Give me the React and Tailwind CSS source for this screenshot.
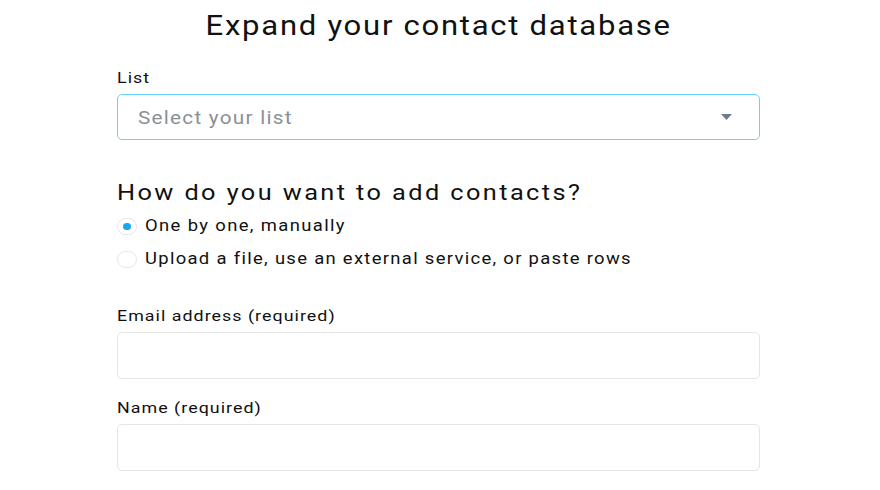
export default function App() {
  return (
    <div className="w-[880px] h-[490px] bg-white overflow-hidden" style={{ fontFamily: "Roboto, 'Liberation Sans', sans-serif" }}>
      <div className="w-[643px] ml-[117px] pt-[8px] flex flex-col">
        <h1 className="h-[36px] flex justify-center items-center text-[27px] leading-[36px] text-[#111]">
          <span className="inline-block whitespace-nowrap scale-x-[1.15] origin-center tracking-[1.5px]">Expand your contact database</span>
        </h1>
        <label className="mt-[24px] h-[20px] text-[15.5px] leading-[20px] text-[#111]">
          <span className="inline-block whitespace-nowrap scale-x-[1.15] origin-left tracking-[0.9px]">List</span>
        </label>
        <div className="mt-[6px] h-[46px] rounded-[5px] border-[1.5px] border-[#66d4fa] flex items-center justify-between pl-[20px] pr-[27px]">
          <span className="inline-block whitespace-nowrap scale-x-[1.15] origin-left text-[18px] text-[#8b9097] tracking-[1.1px]">Select your list</span>
          <svg width="11" height="6" viewBox="0 0 11 6"><path d="M0 0 L11 0 L5.5 6 Z" fill="#6b7a90" /></svg>
        </div>
        <h2 className="mt-[39px] h-[28px] text-[22px] leading-[28px] text-[#111]">
          <span className="inline-block whitespace-nowrap scale-x-[1.15] origin-left tracking-[2.1px]">How do you want to add contacts?</span>
        </h2>
        <div className="mt-[9px] flex items-center gap-[8px] h-[20px]">
          <span className="w-[20px] h-[17px] shrink-0 rounded-full border border-[#e6e6e6] flex items-center justify-center">
            <span className="w-[8px] h-[7px] rounded-full bg-[#17a8f0]"></span>
          </span>
          <span className="inline-block whitespace-nowrap scale-x-[1.15] origin-left text-[16px] text-[#111] tracking-[1.2px]">One by one, manually</span>
        </div>
        <div className="mt-[13px] flex items-center gap-[8px] h-[20px]">
          <span className="w-[20px] h-[17px] shrink-0 rounded-full border border-[#e6e6e6]"></span>
          <span className="inline-block whitespace-nowrap scale-x-[1.15] origin-left text-[16px] text-[#111] tracking-[1.15px]">Upload a file, use an external service, or paste rows</span>
        </div>
        <label className="mt-[37px] h-[20px] text-[15.5px] leading-[20px] text-[#111]">
          <span className="inline-block whitespace-nowrap scale-x-[1.15] origin-left tracking-[0.9px]">Email address (required)</span>
        </label>
        <div className="mt-[6px] h-[47px] rounded-[5px] border border-[#e5e5e5]"></div>
        <label className="mt-[19px] h-[20px] text-[15.5px] leading-[20px] text-[#111]">
          <span className="inline-block whitespace-nowrap scale-x-[1.15] origin-left tracking-[0.9px]">Name (required)</span>
        </label>
        <div className="mt-[6px] h-[47px] rounded-[5px] border border-[#e5e5e5]"></div>
      </div>
    </div>
  );
}
